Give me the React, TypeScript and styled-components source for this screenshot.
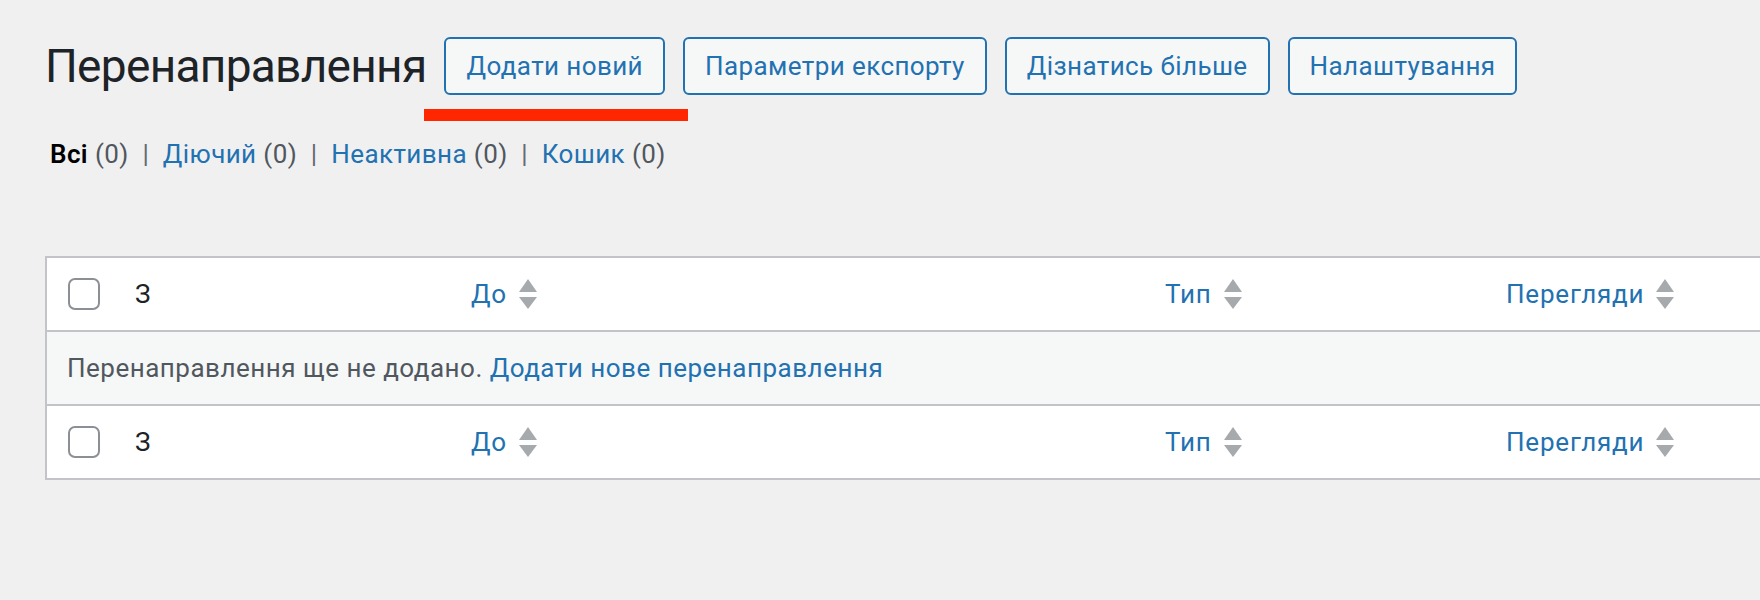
import styled, { createGlobalStyle } from "styled-components";

const GlobalStyle = createGlobalStyle`
  html, body {
    margin: 0;
    padding: 0;
    background: #f0f0f1;
    overflow: hidden;
  }
  body {
    font-family: Roboto, "Liberation Sans", sans-serif;
  }
`;

const Page = styled.div`
  padding: 37px 0 0 45px;
  min-height: 600px;
  box-sizing: border-box;
  letter-spacing: 0.5px;
`;

const TitleRow = styled.div`
  display: flex;
  align-items: center;
  gap: 18px;
`;

const Title = styled.h1`
  margin: 0;
  font-size: 46px;
  font-weight: 400;
  line-height: 58px;
  letter-spacing: -0.7px;
  color: #1d2327;
`;

const ActionButton = styled.a`
  position: relative;
  display: inline-flex;
  align-items: center;
  height: 58px;
  box-sizing: border-box;
  padding: 0 20px;
  border: 2px solid #2271b1;
  border-radius: 6px;
  background: #f6f7f7;
  color: #2271b1;
  font-size: 26px;
  letter-spacing: 0.4px;
  text-decoration: none;
  white-space: nowrap;
`;

// червона позначка під першою кнопкою
const Highlight = styled.span`
  position: absolute;
  left: -22px;
  top: calc(100% + 16px);
  width: 264px;
  height: 12px;
  background: #ff2600;
`;

const Filters = styled.ul`
  display: flex;
  margin: 39px 0 0 5px;
  padding: 0;
  list-style: none;
  font-size: 26px;
  line-height: 40px;
  letter-spacing: 0.4px;
  color: #646970;
  white-space: pre;
`;

const FilterLink = styled.a<{ $current?: boolean }>`
  color: ${({ $current }) => ($current ? "#000" : "#2271b1")};
  font-weight: ${({ $current }) => ($current ? 600 : 400)};
  text-decoration: none;
`;

const Count = styled.span`
  color: #50575e;
  font-weight: 400;
`;

const Table = styled.div`
  margin-top: 82px;
  width: 1800px;
  border: 2px solid #c3c4c7;
  border-right: none;
  background: #fff;
`;

const Row = styled.div<{ $muted?: boolean }>`
  display: grid;
  grid-template-columns: 88px 336px 694px 341px 1fr;
  align-items: center;
  height: 72px;
  background: ${({ $muted }) => ($muted ? "#f6f7f7" : "#fff")};
  font-size: 26px;
  & + & {
    border-top: 2px solid #c3c4c7;
  }
`;

const CheckCell = styled.div`
  display: flex;
  align-items: center;
  padding-left: 21px;
`;

const CheckBox = styled.span`
  display: block;
  width: 32px;
  height: 32px;
  box-sizing: border-box;
  border: 2px solid #8c8f94;
  border-radius: 7px;
  background: #fff;
`;

const HeadText = styled.span`
  color: #1d2327;
`;

const SortHead = styled.a`
  display: inline-flex;
  align-items: center;
  gap: 11px;
  color: #2271b1;
  letter-spacing: 0.8px;
  text-decoration: none;
`;

const EmptyCell = styled.div`
  grid-column: 1 / -1;
  padding-left: 20px;
  color: #50575e;
  a {
    color: #2271b1;
    text-decoration: none;
  }
`;

function SortArrows() {
  return (
    <svg width="20" height="32" viewBox="0 0 20 32" aria-hidden>
      <polygon points="10,1 19,14 1,14" fill="#a7aaad" />
      <polygon points="1,19 19,19 10,31" fill="#a7aaad" />
    </svg>
  );
}

function HeaderRow() {
  return (
    <Row>
      <CheckCell>
        <CheckBox />
      </CheckCell>
      <HeadText>З</HeadText>
      <div>
        <SortHead>
          До
          <SortArrows />
        </SortHead>
      </div>
      <div>
        <SortHead>
          Тип
          <SortArrows />
        </SortHead>
      </div>
      <div>
        <SortHead>
          Перегляди
          <SortArrows />
        </SortHead>
      </div>
    </Row>
  );
}

const filters = [
  { label: "Всі", count: 0, current: true },
  { label: "Діючий", count: 0 },
  { label: "Неактивна", count: 0 },
  { label: "Кошик", count: 0 },
];

export default function App() {
  return (
    <Page>
      <GlobalStyle />
      <TitleRow>
        <Title>Перенаправлення</Title>
        <ActionButton>
          Додати новий
          <Highlight />
        </ActionButton>
        <ActionButton>Параметри експорту</ActionButton>
        <ActionButton>Дізнатись більше</ActionButton>
        <ActionButton>Налаштування</ActionButton>
      </TitleRow>
      <Filters>
        {filters.map((f, i) => (
          <li key={f.label}>
            <FilterLink $current={f.current}>
              {f.label} <Count>({f.count})</Count>
            </FilterLink>
            {i < filters.length - 1 && "  |  "}
          </li>
        ))}
      </Filters>
      <Table>
        <HeaderRow />
        <Row $muted>
          <EmptyCell>
            Перенаправлення ще не додано. <a>Додати нове перенаправлення</a>
          </EmptyCell>
        </Row>
        <HeaderRow />
      </Table>
    </Page>
  );
}
